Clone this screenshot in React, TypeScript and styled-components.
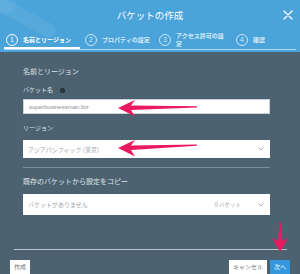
import styled, { createGlobalStyle } from 'styled-components';

const GlobalStyle = createGlobalStyle`
    html, body {
        margin: 0;
        padding: 0;
        background: #4d6270;
    }
    * {
        box-sizing: border-box;
    }
`

const steps = [
    { no: 1, label: '名前とリージョン', active: true },
    { no: 2, label: 'プロパティの設定', active: false },
    { no: 3, label: 'アクセス許可の設定', active: false },
    { no: 4, label: '確認', active: false },
];

export default function App() {
    return (
        <>
        <GlobalStyle />
        <Page>
            <Header>
                <HeaderDecor width="80" height="40" viewBox="0 0 80 40">
                    <rect x="-10" y="8" width="70" height="14" rx="7" transform="rotate(28 20 15)" fill="rgba(255,255,255,0.07)" />
                    <circle cx="6" cy="4" r="10" fill="rgba(255,255,255,0.06)" />
                </HeaderDecor>
                <TitleRow>
                    <span />
                    <Title>バケットの作成</Title>
                    <CloseButton>
                        <svg width="10" height="10" viewBox="0 0 10 10">
                            <path d="M1 1 L9 9 M9 1 L1 9" stroke="#fff" strokeWidth="1.3" strokeLinecap="round" />
                        </svg>
                    </CloseButton>
                </TitleRow>
                <Steps>
                    {steps.map(s => (
                        <Step key={s.no} $active={s.active}>
                            <StepCircle $active={s.active}>{s.no}</StepCircle>
                            <StepLabel $active={s.active}>{s.label}</StepLabel>
                        </Step>
                    ))}
                </Steps>
            </Header>

            <Content>
                <SectionTitle>名前とリージョン</SectionTitle>
                <FieldLabel>
                    バケット名
                    <InfoDot>i</InfoDot>
                </FieldLabel>
                <TextInput>superbusinessman.biz</TextInput>

                <FieldLabel>リージョン</FieldLabel>
                <SelectBox $height={18}>
                    <SelectText>アジアパシフィック (東京)</SelectText>
                    <Chevron />
                </SelectBox>

                <Divider />

                <SectionTitle $gap={8}>既存のバケットから設定をコピー</SectionTitle>
                <SelectBox $height={21} $gap={8}>
                    <SelectText>バケットがありません</SelectText>
                    <SelectRight>
                        <Count>0 バケット</Count>
                        <Chevron />
                    </SelectRight>
                </SelectBox>
            </Content>

            <Footer>
                <FooterLine />
                <ButtonRow>
                    <Button>作成</Button>
                    <RightButtons>
                        <Button>キャンセル</Button>
                        <Button $primary>次へ</Button>
                    </RightButtons>
                </ButtonRow>
            </Footer>

            <Arrows width="300" height="274" viewBox="0 0 300 274">
                <polygon fill="#ea1a61" points="118,108 135,100 131,105.6 197,106.3 197,107.4 131,110 135,116.5" />
                <polygon fill="#ea1a61" points="118,148 135,140 131,145.6 197,144.6 197,145.7 131,150 135,156.5" />
                <polygon fill="#ea1a61" points="280,252 272,238 278,241 279.4,222 280.6,222 282,241 288,238" />
            </Arrows>
        </Page>
        </>
    )
}

function Chevron() {
    return (
        <svg width="6" height="4" viewBox="0 0 6 4">
            <path d="M0.6 0.6 L3 3 L5.4 0.6" fill="none" stroke="#9aa8b2" strokeWidth="0.9" />
        </svg>
    )
}

const Page = styled.div`
    position: relative;
    width: 300px;
    height: 274px;
    overflow: hidden;
    display: flex;
    flex-direction: column;
    background: #4d6270;
    font-family: "Noto Sans CJK JP", "Noto Sans", sans-serif;
`

const Header = styled.header`
    position: relative;
    background: #4aa3d9;
    padding: 0 4px 2px;
    color: #fff;
`

const HeaderDecor = styled.svg`
    position: absolute;
    left: 0;
    top: 0;
`

const TitleRow = styled.div`
    height: 30px;
    display: grid;
    grid-template-columns: 1fr auto 1fr;
    align-items: center;
`

const Title = styled.h1`
    margin: 0;
    font-size: 9.5px;
    font-weight: 400;
    letter-spacing: 0;
`

const CloseButton = styled.div`
    justify-self: end;
    display: flex;
    margin-right: 3px;
`

const Steps = styled.div`
    display: grid;
    grid-template-columns: 76px 71px 74px 1fr;
    column-gap: 3px;
    height: 20px;
    border-bottom: 1px solid rgba(255, 255, 255, 0.55);
`

const Step = styled.div<{ $active: boolean }>`
    display: flex;
    align-items: center;
    gap: 5px;
    padding-left: 2px;
    box-shadow: ${p => p.$active ? 'inset 0 -2px 0 #fff' : 'none'};
`

const StepCircle = styled.div<{ $active: boolean }>`
    width: 12px;
    height: 12px;
    flex: none;
    border-radius: 50%;
    border: 1px solid ${p => p.$active ? '#fff' : 'rgba(255,255,255,0.7)'};
    color: ${p => p.$active ? '#fff' : 'rgba(255,255,255,0.75)'};
    font-size: 7px;
    display: flex;
    align-items: center;
    justify-content: center;
    font-family: "Liberation Sans", sans-serif;
`

const StepLabel = styled.div<{ $active: boolean }>`
    max-width: 49px;
    font-size: 6px;
    line-height: 8px;
    font-weight: 700;
    color: ${p => p.$active ? '#fff' : 'rgba(255,255,255,0.8)'};
`

const Content = styled.main`
    flex: 1;
    padding: 14px 30px 0 23px;
    color: #dfe5ea;
`

const SectionTitle = styled.div<{ $gap?: number }>`
    margin-top: ${p => p.$gap ?? 0}px;
    font-size: 7px;
    line-height: 10px;
`

const FieldLabel = styled.div`
    margin-top: 9px;
    display: flex;
    align-items: center;
    gap: 7px;
    font-size: 6px;
    line-height: 10px;
`

const InfoDot = styled.span`
    width: 5px;
    height: 5px;
    border-radius: 50%;
    background: #222c33;
    color: #8897a2;
    font-size: 4px;
    line-height: 5px;
    text-align: center;
    font-family: "Liberation Sans", sans-serif;
`

const TextInput = styled.div`
    margin-top: 4px;
    height: 15px;
    background: #fff;
    border: 1px solid #c9d1d6;
    padding: 0 5px;
    display: flex;
    align-items: center;
    font-family: "Liberation Sans", sans-serif;
    font-size: 6px;
    color: #8a8f94;
`

const SelectBox = styled.div<{ $height: number; $gap?: number }>`
    margin-top: ${p => p.$gap ?? 7}px;
    height: ${p => p.$height}px;
    background: #fff;
    padding: 0 6px 0 5px;
    display: flex;
    align-items: center;
    justify-content: space-between;
`

const SelectText = styled.span`
    font-size: 6px;
    color: #a3a9ae;
`

const SelectRight = styled.div`
    display: flex;
    align-items: center;
    gap: 17px;
`

const Count = styled.span`
    font-size: 5.5px;
    color: #9aa1a6;
`

const Divider = styled.hr`
    margin: 9px 0 0;
    border: none;
    height: 1px;
    background: #7d8e99;
`

const Footer = styled.footer`
    padding: 0 10px;
`

const FooterLine = styled.div`
    margin: 0 3px 0 4px;
    height: 1px;
    background: #b9c4cb;
`

const ButtonRow = styled.div`
    margin-top: 10px;
    display: flex;
    justify-content: space-between;
`

const RightButtons = styled.div`
    display: flex;
    gap: 3px;
`

const Button = styled.button<{ $primary?: boolean }>`
    height: 14px;
    padding: 0 4px;
    border: none;
    border-radius: 0;
    background: ${p => p.$primary ? '#3597db' : '#fff'};
    color: ${p => p.$primary ? '#fff' : '#6e777e'};
    font-family: "Noto Sans CJK JP", sans-serif;
    font-size: 6px;
    line-height: 14px;
`

const Arrows = styled.svg`
    position: absolute;
    left: 0;
    top: 0;
    pointer-events: none;
`
